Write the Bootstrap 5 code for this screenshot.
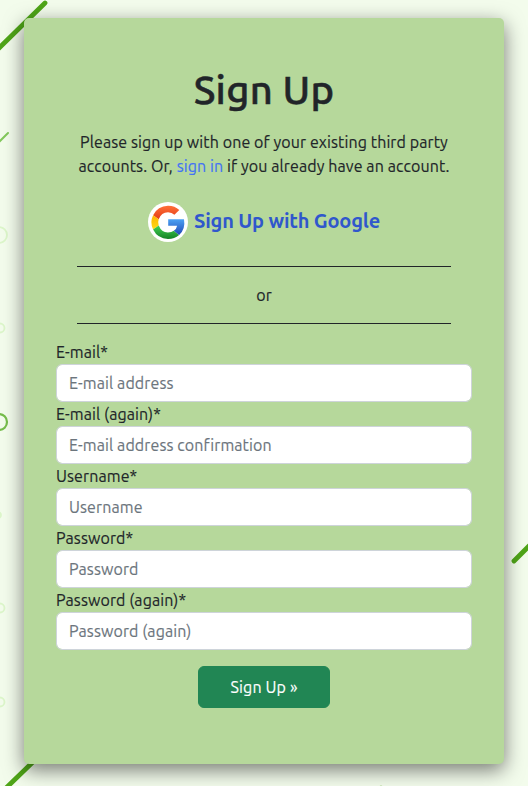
<!DOCTYPE html>
<html lang="en">
<head>
<meta charset="utf-8">
<meta name="viewport" content="width=device-width, initial-scale=1">
<title>Sign Up</title>
<link href="https://cdn.jsdelivr.net/npm/bootstrap@5.3.0/dist/css/bootstrap.min.css" rel="stylesheet">
<style>
body { font-family: Ubuntu, "Noto Sans", sans-serif; background: #f3fcec; color: #212529; height: 786px; overflow: hidden; letter-spacing: .1px; -webkit-text-stroke: .15px currentColor; }
.backdrop { z-index: -1; }
.signup-panel { width: 480px; height: 746px; margin: 18px auto 0; padding: 48px 32px 0; background: #b6d89b; border-radius: 5px; box-shadow: 0 6px 20px rgba(0,0,0,.52); }
h1 { font-size: 40px; letter-spacing: .25px; -webkit-text-stroke: .5px #212529; }
.intro { margin: 16px 0 24px; white-space: nowrap; }
.intro a { color: #4272f5; }
.google-link { color: #3057cc; font-size: 20px; line-height: 24px; gap: 6px; margin-bottom: 24px; letter-spacing: -.18px; white-space: nowrap; -webkit-text-stroke: 0; }
.google-link span { padding-bottom: 2px; }
.divider { width: 374px; height: 1px; margin: 16px auto; background: #212529; opacity: 1; border: 0; }
.form-control { height: 38px; border-color: #ced4da; letter-spacing: .1px; }
.form-control::placeholder { color: #6c757d; }
.btn-signup { --bs-btn-bg: #218654; --bs-btn-border-color: #218654; width: 132px; height: 42px; letter-spacing: .15px; }
</style>
</head>
<body>
<svg class="backdrop position-absolute top-0 start-0" width="528" height="786" fill="none" stroke-linecap="round" aria-hidden="true">
  <g stroke="#4fa518" stroke-width="4.8"><path d="M-4 51 45 3M4 790 36 759M514 561 534 541"/></g>
  <path d="M-2 143 8 133" stroke="#83c95c" stroke-width="2"/>
  <circle cx="-1" cy="422" r="8" stroke="#76bd4c" stroke-width="2.2"/>
  <g stroke="#dcf6ca" stroke-width="1.8"><circle cx="-1" cy="235" r="8"/><circle cx="0" cy="328" r="4.5"/><circle cx="0" cy="608" r="4.5"/><circle cx="0" cy="702" r="4.5"/><circle cx="-2" cy="515" r="3"/></g>
  <circle cx="381" cy="787" r="1.6" fill="#9fd17d"/>
</svg>
<main class="signup-panel">
  <h1 class="text-center mb-0">Sign Up</h1>
  <p class="intro text-center">Please sign up with one of your existing third party<br>accounts. Or, <a href="#" class="text-decoration-none">sign in</a> if you already have an account.</p>
  <a href="#" class="google-link d-flex justify-content-center align-items-center fw-bold text-decoration-none">
    <svg width="40" height="40" viewBox="0 0 40 40" fill="none" aria-hidden="true">
      <defs>
        <linearGradient id="gr" x2="0" y2="1"><stop stop-color="#ff7038"/><stop offset="1" stop-color="#e33b17"/></linearGradient>
        <linearGradient id="gy" x2="0" y2="1"><stop stop-color="#ffb100"/><stop offset="1" stop-color="#ffdc18"/></linearGradient>
        <linearGradient id="gg" x2="0" y2="1"><stop stop-color="#43d254"/><stop offset="1" stop-color="#158326"/></linearGradient>
        <linearGradient id="gb" x2="0" y2="1"><stop stop-color="#4ba2f4"/><stop offset="1" stop-color="#2149b5"/></linearGradient>
      </defs>
      <circle cx="20" cy="20" r="20" fill="#fff"/>
      <path d="M5.1 13.2Q9.7 3.8 20 3.7 26.7 3.6 31.3 8L26.4 12.8Q23.9 10.2 20 10.2 13.3 10.2 10.7 17.3Z" fill="url(#gr)"/>
      <path d="M5.1 13.2 10.7 17.3Q9.6 20.3 10.7 23.4L5.1 27.6Q1.6 20.3 5.1 13.2Z" fill="url(#gy)"/>
      <path d="M5.1 27.6 10.7 23.4Q13.6 30.5 20 30.4 23.5 30.4 25.8 28.8L31.1 32.9Q26.6 36.9 20 36.9 9.6 36.8 5.1 27.6Z" fill="url(#gg)"/>
      <path d="M20.2 17.2H36Q37.7 27.3 31.1 32.9L25.8 28.8Q28.5 27 29.1 23.7H20.2Z" fill="url(#gb)"/>
    </svg>
    <span>Sign Up with Google</span>
  </a>
  <hr class="divider">
  <div class="text-center">or</div>
  <hr class="divider">
  <form>
    <label class="d-block" for="email">E-mail*</label>
    <input class="form-control" id="email" type="email" placeholder="E-mail address">
    <label class="d-block" for="email2">E-mail (again)*</label>
    <input class="form-control" id="email2" type="email" placeholder="E-mail address confirmation">
    <label class="d-block" for="username">Username*</label>
    <input class="form-control" id="username" type="text" placeholder="Username">
    <label class="d-block" for="password">Password*</label>
    <input class="form-control" id="password" type="password" placeholder="Password">
    <label class="d-block" for="password2">Password (again)*</label>
    <input class="form-control" id="password2" type="password" placeholder="Password (again)">
    <div class="text-center mt-3"><button class="btn btn-success btn-signup" type="button">Sign Up »</button></div>
  </form>
</main>
<script src="https://cdn.jsdelivr.net/npm/bootstrap@5.3.0/dist/js/bootstrap.bundle.min.js"></script>
</body>
</html>
